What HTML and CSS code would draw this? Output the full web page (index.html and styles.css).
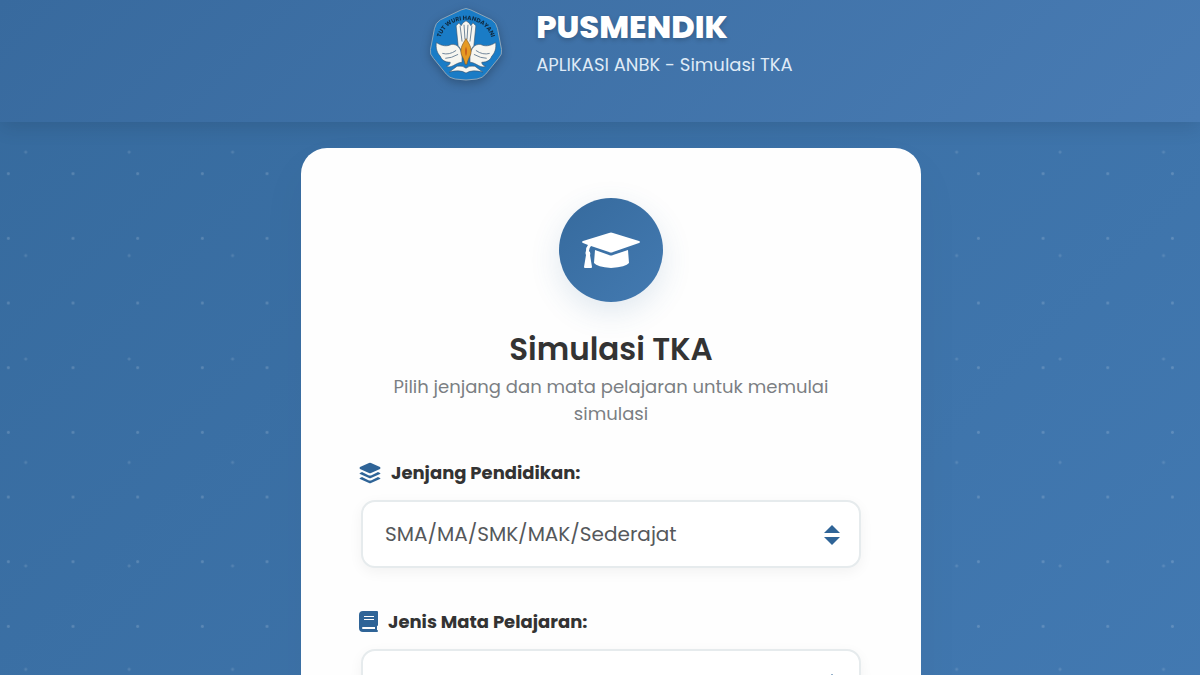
FILE: index.html
```html
<!DOCTYPE html>
<html lang="id">

<head>
    <meta charset="UTF-8">
    <meta name="viewport" content="width=device-width, initial-scale=1.0">
    <title>PUSMENDIK - Simulasi TKA</title>
    <link rel="stylesheet" href="styles.css">
</head>

<body>
    <header class="header">
        <svg class="logo" viewBox="0 0 74 74" role="img" aria-label="Tut Wuri Handayani">
            <defs>
                <path id="arc" d="M10 36C13 4 61 4 64 36" />
            </defs>
            <path d="M32 2Q37 -1 42 2L63 12Q68 15 69 21L73 42Q74 47 70 51L57 67Q54 71 48 72Q37 74 26 72Q20 71 17 67L4 51Q0 47 1 42L5 21Q6 15 11 12Z" fill="#1a7cc6" stroke="#8fa6b8" stroke-width="1" />
            <text class="logo-text"><textPath href="#arc" startOffset="50%" text-anchor="middle">TUT WURI HANDAYANI</textPath></text>
            <g fill="#f7f6f0" stroke="#38506a" stroke-width=".6" stroke-linejoin="round">
                <path d="M29 38L27 18L30 15L32 18L34 15L37 13L40 15L42 18L44 15L47 18L45 38L41 44H33Z" />
                <path d="M33 55C27 55 22 62 17 59C20 58 21 57 21 55C15 55 12 52 11 49C8 46 6 41 7 35C13 39 18 39 22 37C28 36 32 41 33 48Z" />
                <path d="M41 55C47 55 52 62 57 59C54 58 53 57 53 55C59 55 62 52 63 49C66 46 68 41 67 35C61 39 56 39 52 37C46 36 42 41 41 48Z" />
                <path d="M20 65L28 59Q34 58 37 61Q40 58 46 59L54 65Q43 62 37 66Q31 62 20 65Z" />
            </g>
            <path d="M31 18L33 34M35 17L36 32M39 17L38 32M43 18L41 34M13 46Q20 48 27 43M16 51Q22 51 29 47M61 46Q54 48 47 43M58 51Q52 51 45 47" fill="none" stroke="#71869a" stroke-width="1" />
            <path d="M37 31C34 36 31 40 32 46C33 50 35 51 36 57H38C39 51 41 50 42 46C43 40 40 36 37 31Z" fill="#e69a24" stroke="#6c5230" stroke-width=".6" />
            <path d="M37 39Q35 44 37 49Q39 44 37 39Z" fill="#c85e1c" />
        </svg>
        <div class="brand">
            <p class="brand-name">PUSMENDIK</p>
            <p class="brand-sub">APLIKASI ANBK - Simulasi TKA</p>
        </div>
    </header>

    <main class="content">
        <form class="card">
            <div class="card-icon">
                <svg viewBox="0 0 58 36" aria-hidden="true">
                    <path d="M27 1Q29 0 31 1L57 9Q59 10 57 11L31 20Q29 21 27 20L9 14Q7 16 7 19Q9 21 8 23L10 35Q10 36 9 36H3Q2 36 2 35L4 23Q3 21 4 19Q4 15 6 13L1 11Q-1 10 1 9Z" />
                    <path d="M13 18L27 23Q29 24 31 23L46 18L47 31Q44 35 29 36Q15 35 12 31Z" />
                </svg>
            </div>
            <h1>Simulasi TKA</h1>
            <p class="intro">Pilih jenjang dan mata pelajaran untuk memulai simulasi</p>

            <div class="field">
                <label for="jenjang">
                    <svg class="icon-layers" viewBox="0 0 22 22" aria-hidden="true">
                        <path d="M1 5L10 1Q11 .6 12 1L21 5Q22 6 21 7L12 11Q11 11.4 10 11L1 7Q0 6 1 5Z" />
                        <path d="M3 10L9 13Q11 14 13 13L19 10L21 11Q22 11.5 21 12L12 16Q11 16.4 10 16L1 12Q0 11.5 1 11Z" />
                        <path d="M3 15L9 18Q11 19 13 18L19 15L21 16Q22 16.5 21 17L12 21Q11 21.4 10 21L1 17Q0 16.5 1 16Z" />
                    </svg>
                    Jenjang Pendidikan:
                </label>
                <div class="select-box">
                    <select id="jenjang">
                        <option>SMA/MA/SMK/MAK/Sederajat</option>
                    </select>
                    <svg class="sort" viewBox="0 0 16 20" aria-hidden="true">
                        <path d="M8 0L16 8H0ZM0 12H16L8 20Z" />
                    </svg>
                </div>
            </div>

            <div class="field">
                <label for="jenis">
                    <svg class="icon-book" viewBox="0 0 19 21" aria-hidden="true">
                        <path fill-rule="evenodd" d="M4 0H18Q19 0 19 1V14Q19 15 18 15V19Q19 19 19 20Q19 21 18 21H4Q0 21 0 17V4Q0 0 4 0ZM5 5V6H15V5ZM5 8V9H15V8ZM4 16Q3 16 3 17Q3 18 4 18H16V16Z" />
                    </svg>
                    Jenis Mata Pelajaran:
                </label>
                <div class="select-box">
                    <select id="jenis">
                        <option>Wajib</option>
                    </select>
                    <svg class="sort" viewBox="0 0 16 20" aria-hidden="true">
                        <path d="M8 0L16 8H0ZM0 12H16L8 20Z" />
                    </svg>
                </div>
            </div>
        </form>
    </main>
</body>

</html>
```
FILE: styles.css
```css
* {
    box-sizing: border-box;
}

body {
    margin: 0;
    font-family: Poppins, Inter, sans-serif;
    color: #333;
    background-color: #3b70a5;
    background-image:
        radial-gradient(circle, rgba(255, 255, 255, .16) 1px, transparent 2px),
        radial-gradient(circle, rgba(255, 255, 255, .12) 1px, transparent 2px),
        linear-gradient(135deg, #366a9d, #437ab3);
    background-size: 5.39vw 5.39vw, 8.62vw 8.62vw, auto;
    background-position: -24px 12px, -26px -3px, 0 0;
}

p,
h1 {
    margin: 0;
}

.header {
    position: relative;
    display: flex;
    justify-content: center;
    gap: 33px;
    padding: 8px 0 41px 22px;
    background: linear-gradient(135deg, #386a9e, #487bb3);
    box-shadow: 0 4px 20px rgba(0, 0, 0, .12);
}

.logo {
    width: 74px;
    height: 73px;
    filter: drop-shadow(0 3px 5px rgba(0, 0, 0, .25));
}

.logo-text {
    font-size: 6px;
    font-weight: 700;
    fill: #102a40;
}

.brand-name {
    font-size: 32px;
    font-weight: 800;
    line-height: 38px;
    color: #fff;
    text-shadow: 0 2px 5px rgba(0, 0, 0, .2);
}

.brand-sub {
    margin-top: 5px;
    font-size: 18px;
    line-height: 27px;
    color: #dfeaf6;
}

.content {
    display: flex;
    justify-content: center;
    padding: 26px 0 40px 22px;
}

.card {
    width: 620px;
    padding: 50px 60px;
    border-radius: 26px;
    background: #fefefe;
    box-shadow: 0 20px 50px rgba(0, 0, 0, .04);
}

.card-icon {
    display: flex;
    align-items: center;
    justify-content: center;
    width: 104px;
    height: 104px;
    margin: 0 auto 26px;
    border-radius: 50%;
    background: linear-gradient(135deg, #366a9d, #437ab1);
    box-shadow: 0 10px 30px rgba(54, 106, 157, .15);
}

.card-icon svg {
    width: 58px;
    fill: #fff;
}

h1 {
    font-size: 31px;
    font-weight: 600;
    line-height: 42px;
    text-align: center;
}

.intro {
    margin: 3px 0 32px;
    font-size: 18px;
    line-height: 27px;
    text-align: center;
    color: #7b7f83;
}

.field {
    margin-bottom: 40px;
}

label {
    display: flex;
    align-items: center;
    gap: 10px;
    margin: 0 0 14px -2px;
    font-size: 18px;
    font-weight: 700;
    line-height: 27px;
}

label svg,
.sort {
    fill: #2f6497;
}

.icon-layers {
    width: 22px;
    height: 22px;
}

.icon-book {
    width: 19px;
    height: 21px;
}

.select-box {
    position: relative;
}

select {
    display: block;
    width: 100%;
    height: 68px;
    padding: 0 60px 0 22px;
    border: 2px solid #e6ebed;
    border-radius: 14px;
    appearance: none;
    background: #fff;
    box-shadow: 0 4px 14px rgba(0, 0, 0, .05);
    font-family: inherit;
    font-size: 20px;
    color: #55585b;
}

/* arrows sit over the select */
.sort {
    position: absolute;
    top: 25px;
    right: 21px;
    width: 16px;
    height: 20px;
    pointer-events: none;
}
```
